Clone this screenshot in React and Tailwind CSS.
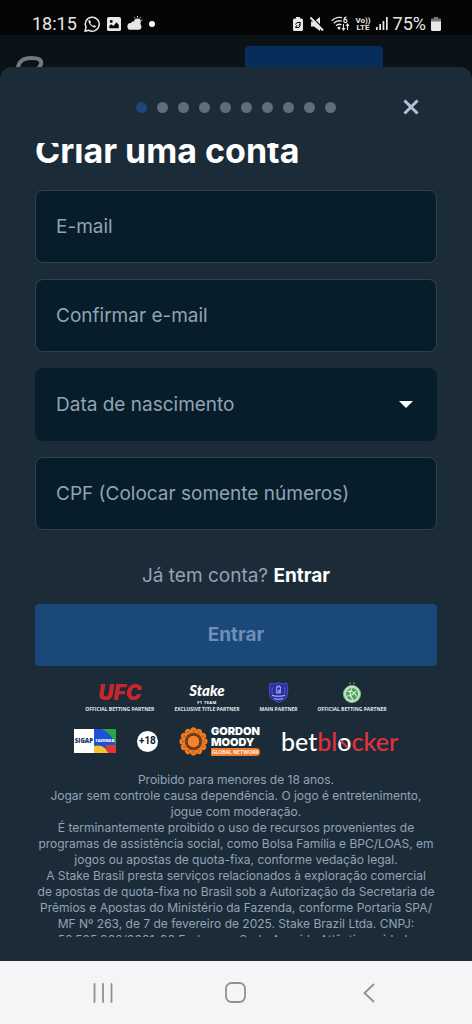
import React from "react";

const sans = "font-['Inter','Open_Sans',sans-serif]";

function StatusBar() {
  return (
    <div className="flex h-[35px] shrink-0 items-center justify-between bg-[#050505] pt-3 pr-[31px] pl-8 text-[#e8e8e8]">
      <div className="flex items-center gap-[6px]">
        <span className="font-['Roboto',sans-serif] text-[18px] leading-5">18:15</span>
        <svg className="h-[18px] w-[18px]" viewBox="0 0 18 18" fill="none" stroke="currentColor" aria-label="WhatsApp">
          <path d="M2 16.2l1-3.800A7 7 0 1 1 5.600 15.200z" strokeWidth="1.500" strokeLinejoin="round" />
          <path d="M6.300 4.800c-.9.600-1.200 1.600-.5 3 1 2.200 2.600 3.700 4.700 4.500 1.200.4 2.200 0 2.600-1.100l-2-1.200-1 .9c-1.300-.6-2.200-1.500-2.800-2.700l.8-.9z" fill="currentColor" stroke="none" />
        </svg>
        <svg className="h-[14px] w-[14px]" viewBox="0 0 15 15" aria-label="Imagem">
          <rect x="0" y="0" width="15" height="15" rx="2" fill="currentColor" />
          <circle cx="4.600" cy="4.800" r="1.500" fill="#050505" />
          <path d="M2.500 12V9.500l2.300-1.700 2 1.800 3.400-4 2.400 2.600V12z" fill="#050505" />
        </svg>
        <svg className="h-[15px] w-4" viewBox="0 0 16 15" aria-label="Tempo">
          <circle cx="10.500" cy="5.800" r="3.300" fill="currentColor" />
          <path d="M10.500 0v1.500M13.500 1.200l-.7 1.200M15.500 4l-1.200.5M7.500 1.200l.6 1.100" stroke="currentColor" strokeWidth="1" />
          <path d="M3.800 13.800a3.400 3.400 0 0 1 0-6.800A3.600 3.600 0 0 1 10.300 7.500a3.200 3.200 0 1 1 1.700 6.300z" fill="currentColor" />
        </svg>
        <span className="h-[6px] w-[6px] rounded-full bg-white" />
      </div>
      <div className="flex items-center gap-[5px]">
        <svg className="h-[14px] w-[10px]" viewBox="0 0 10 14" aria-label="Economia de energia">
          <path d="M3 0h4v1.500h1.500A1.500 1.500 0 0 1 10 3v9.500A1.500 1.500 0 0 1 8.500 14h-7A1.500 1.500 0 0 1 0 12.500V3a1.500 1.500 0 0 1 1.500-1.500H3z" fill="currentColor" />
          <path d="M2.500 7.500L4 5.500h3.500L6 8.500M7.500 7.500L6 10.500H2.500L4 8" fill="none" stroke="#050505" strokeWidth="1" />
        </svg>
        <svg className="ml-[2px] h-[14px] w-[14px]" viewBox="0 0 14 14" aria-label="Sem som">
          <path d="M1 4.500h3L10 0v14L4 9.500H1z" fill="currentColor" />
          <path d="M2 0l12.500 13" stroke="#050505" strokeWidth="1.500" />
          <path d="M.5 .5l12.500 13" stroke="currentColor" strokeWidth="2" />
        </svg>
        <svg className="ml-[2px] h-[15px] w-[19px]" viewBox="0 0 19 15" fill="none" stroke="currentColor" aria-label="Wi-Fi 6">
          <path d="M.8 4.800A11 11 0 0 1 11 1.600M2.800 7.300a8 8 0 0 1 8-2.200M5 9.800a5 5 0 0 1 5.500-1" strokeWidth="1.400" />
          <circle cx="8" cy="12" r="1.500" fill="currentColor" stroke="none" />
          <path d="M15.500 1.200c-2 .2-2.500 1.500-2.500 3.200M12.800 5a1.600 1.600 0 1 0 3.200 0 1.600 1.600 0 1 0-3.200 0" strokeWidth="1.200" />
          <path d="M12.500 8v5.500M11 12l1.500 2 1.500-2M16.500 14V8.500M15 10l1.500-2L18 10" strokeWidth="1.100" />
        </svg>
        <span className="flex flex-col items-center font-['Roboto',sans-serif] text-[8px] leading-[7px] font-bold">
          <span>Vo))</span>
          <span>LTE</span>
        </span>
        <svg className="h-[13px] w-3" viewBox="0 0 12 13" fill="currentColor" aria-label="Sinal">
          <rect x="0" y="10" width="1.700" height="3" />
          <rect x="3.300" y="7" width="1.700" height="6" />
          <rect x="6.600" y="4" width="1.700" height="9" />
          <rect x="10" y="0" width="1.700" height="13" />
        </svg>
        <span className="font-['Roboto',sans-serif] text-[18px] leading-5">75%</span>
        <svg className="h-[14px] w-[10px]" viewBox="0 0 10 14" aria-label="Bateria">
          <path d="M3 0h4v1.500h3V5H0V1.500h3z" fill="#777" />
          <path d="M0 4.500h10v8A1.500 1.500 0 0 1 8.500 14h-7A1.500 1.500 0 0 1 0 12.500z" fill="currentColor" />
        </svg>
      </div>
    </div>
  );
}

const field =
  "h-[73px] w-full rounded-[8px] border border-[#30424f] bg-[#071d2a] px-5 text-[19px] leading-6 text-[#93a2b6] placeholder:text-[#93a2b6] placeholder:opacity-100 outline-none";

const caption = "font-['Open_Sans',sans-serif] text-[5px] leading-[6px] font-bold whitespace-nowrap text-[#e4e8ea]";

function Sponsors() {
  return (
    <div className="flex items-end justify-center gap-5">
      <div className="flex flex-col items-center gap-[3px]">
        <span className="font-['Inter',sans-serif] text-[21px] leading-5 font-black text-[#c9252f] italic">UFC</span>
        <span className={caption}>OFFICIAL BETTING PARTNER</span>
      </div>
      <div className="flex flex-col items-center">
        <span className="font-['Lato',sans-serif] text-[15px] leading-[17px] font-black text-white italic">Stake</span>
        <span className="font-['Open_Sans',sans-serif] text-[4px] leading-[7px] font-bold tracking-widest text-white">F1 TEAM</span>
        <span className={caption}>EXCLUSIVE TITLE PARTNER</span>
      </div>
      <div className="flex flex-col items-center gap-[3px]">
        <svg className="h-[21px] w-[21px]" viewBox="0 0 21 21" aria-label="Everton">
          <path d="M2 1l4 1 4.500-1.500L15 2l4-1v3l1 1-1 9c-.5 3-4 4.500-8.500 6.500C6 18.500 2.500 17 2 14L1 5l1-1z" fill="#2b2fa5" stroke="#5a61d0" strokeWidth=".7" />
          <path d="M8.500 5h4v6h-4zM9 5V4h3v1M10 11V8h1.500v3" fill="none" stroke="#c3c7ff" strokeWidth=".7" />
          <path d="M5 5c-1.500 3-1.500 5 0 7M16 5c1.500 3 1.500 5 0 7" fill="none" stroke="#6c73e0" strokeWidth=".7" />
          <path d="M4 13.500c5 1 8 1 13 0M6 16.500c3 1 6 1 9 0" fill="none" stroke="#d8dbff" strokeWidth=".9" />
        </svg>
        <span className={caption}>MAIN PARTNER</span>
      </div>
      <div className="flex flex-col items-center gap-[3px]">
        <svg className="h-[21px] w-5" viewBox="0 0 20 21" aria-label="Juventude">
          <circle cx="8" cy="1.200" r=".8" fill="#8fce96" />
          <circle cx="12" cy="1.200" r=".8" fill="#8fce96" />
          <circle cx="10" cy="12" r="8.500" fill="#c2e6c3" stroke="#7fbf86" strokeWidth="1" />
          <circle cx="10" cy="12" r="6" fill="#4b9a5a" />
          <path d="M5 14c4 0 7-2 9-5M10 6.500c-3 4-2 8 1 11M5.500 9.500c3-1 7 0 9 5" stroke="#dff3dd" strokeWidth="1.200" fill="none" />
        </svg>
        <span className={caption}>OFFICIAL BETTING PARTNER</span>
      </div>
    </div>
  );
}

function Seals() {
  const petals = Array.from({ length: 12 }, (_, i) => i * 30);
  return (
    <div className="flex items-center justify-center gap-[21px]">
      <div className="flex h-6 w-[42px] bg-white">
        <span className="flex w-5 items-center justify-center font-['Open_Sans',sans-serif] text-[6px] leading-none font-extrabold text-[#25346c]">SIGAP</span>
        <span className="relative flex flex-1 items-center justify-center overflow-hidden">
          <svg className="absolute inset-0 h-full w-full" viewBox="0 0 22 24" preserveAspectRatio="none" aria-hidden="true">
            <path d="M0 0h22v24H0z" fill="#1d51d8" />
            <path d="M8 0h14v17C20 9 15 4 8 0z" fill="#25a845" />
            <path d="M22 16v8h-9c0-4-1-6-2-8z" fill="#e5382c" />
            <path d="M0 17c6-2 12 1 14 7H0z" fill="#f6c42b" />
          </svg>
          <span className="relative font-['Open_Sans',sans-serif] text-[4px] leading-none font-extrabold text-white">FAZENDA</span>
        </span>
      </div>
      <span className="flex h-[21px] w-[21px] items-center justify-center rounded-full bg-white font-['Roboto',sans-serif] text-[10px] leading-none font-bold text-[#10202b]">+18</span>
      <div className="flex items-center gap-[3px]">
        <svg className="h-[29px] w-[29px]" viewBox="0 0 29 29" aria-hidden="true">
          {petals.map((angle) => (
            <g key={angle} transform={`rotate(${angle} 14.5 14.5)`}>
              <path d="M11.800 1.500Q14.500-.8 17.200 1.500L18 5l-3.500 3L11 5z" fill="#f47a20" />
              <circle cx="14.500" cy="3.900" r="1" fill="#c05a18" />
            </g>
          ))}
          <circle cx="14.500" cy="14.500" r="7.700" fill="none" stroke="#7a3d1c" strokeWidth="2" />
          <circle cx="14.500" cy="14.500" r="6" fill="#f8812a" />
        </svg>
        <div className="flex flex-col font-['Inter',sans-serif] text-white">
          <span className="text-[11px] leading-[11px] font-black">GORDON</span>
          <span className="text-[11px] leading-[11px] font-black">MOODY</span>
          <span className="rounded-r-[4px] bg-[#ef7b2f] px-[1px] text-[5px] leading-[8px] font-semibold whitespace-nowrap">GLOBAL NETWORK</span>
        </div>
      </div>
      <span className="flex items-baseline font-['Lato',sans-serif] text-[25px] leading-7 font-medium text-white">
        bet<span className="text-[#e2313c]">bl</span>
        <span className="relative">
          o
          <svg className="absolute top-[13px] left-[3px] h-2 w-2" viewBox="0 0 8 8" aria-hidden="true">
            <path d="M0 0l8 8" stroke="#e2313c" strokeWidth="2" />
          </svg>
        </span>
        <span className="text-[#e2313c]">cker</span>
      </span>
    </div>
  );
}

const legal = [
  "Proibido para menores de 18 anos.",
  "Jogar sem controle causa dependência. O jogo é entretenimento,",
  "jogue com moderação.",
  "É terminantemente proibido o uso de recursos provenientes de",
  "programas de assistência social, como Bolsa Família e BPC/LOAS, em",
  "jogos ou apostas de quota-fixa, conforme vedação legal.",
  "A Stake Brasil presta serviços relacionados à exploração comercial",
  "de apostas de quota-fixa no Brasil sob a Autorização da Secretaria de",
  "Prêmios e Apostas do Ministério da Fazenda, conforme Portaria SPA/",
  "MF Nº 263, de 7 de fevereiro de 2025. Stake Brazil Ltda. CNPJ:",
  "56.525.936/0001-90 Endereço: Sede Avenida Atlântica, cidade",
];

export default function App() {
  const steps = Array.from({ length: 10 }, (_, i) => i);
  return (
    <div className={`flex h-screen flex-col overflow-hidden bg-[#0b1319] ${sans}`}>
      <StatusBar />
      <div className="flex h-8 shrink-0 items-start justify-between overflow-hidden pt-[11px] pr-[89px] pl-4" aria-hidden="true">
        <svg className="mt-[10px] h-[11px] w-7" viewBox="0 0 28 11">
          <path d="M2 13C2 5 8 2 15 2c8 0 11 2 10 6-.5 2-2 3-3 5" fill="none" stroke="#74787b" strokeWidth="4" />
        </svg>
        <div className="h-8 w-[138px] rounded-[4px] bg-[#062d5b]" />
      </div>
      <div role="dialog" aria-label="Criar uma conta" className="flex min-h-0 flex-1 flex-col rounded-t-[12px] bg-[#1b2c38] pb-6">
        <div className="grid h-[76px] shrink-0 grid-cols-[1fr_auto_1fr] items-center px-[43px] pb-1 pt-2">
          <span />
          <div className="flex gap-[10px]">
            {steps.map((step) => (
              <span key={step} className={step === 0 ? "h-[11px] w-[11px] rounded-full bg-[#1d4778]" : "h-[11px] w-[11px] rounded-full bg-[#5e6e79]"} />
            ))}
          </div>
          <button type="button" aria-label="Fechar" className="flex h-9 w-9 items-center justify-center justify-self-end text-[#b4c1da]">
            <svg className="h-4 w-4" viewBox="0 0 16 16" fill="none" stroke="currentColor" strokeWidth="3">
              <path d="M1.500 1.500l13 13M14.500 1.500l-13 13" />
            </svg>
          </button>
        </div>
        <main className="min-h-0 flex-1 overflow-hidden px-[35px]">
          <h1 className="-mt-3 text-[34px] leading-10 font-bold text-white">Criar uma conta</h1>
          <form className="mt-[19px] flex flex-col gap-4" onSubmit={(e) => e.preventDefault()}>
            <input type="email" aria-label="E-mail" placeholder="E-mail" className={field} />
            <input type="email" aria-label="Confirmar e-mail" placeholder="Confirmar e-mail" className={field} />
            <div className="relative">
              <select aria-label="Data de nascimento" className="block h-[73px] w-full appearance-none rounded-[8px] bg-[#071d2a] px-[21px] text-[19px] leading-6 text-[#93a2b6] outline-none">
                <option>Data de nascimento</option>
              </select>
              <svg className="pointer-events-none absolute top-[33px] right-6 h-[7px] w-[14px]" viewBox="0 0 14 7" aria-hidden="true">
                <path d="M0 0h14L7 7z" fill="#fff" />
              </svg>
            </div>
            <input type="text" aria-label="CPF" placeholder="CPF (Colocar somente números)" className={field} />
            <p className="mt-[18px] text-center text-[19px] leading-6 text-[#93a2b6]">
              Já tem conta? <a href="#entrar" className="font-bold text-white">Entrar</a>
            </p>
            <button type="submit" className="h-[62px] w-full rounded-[4px] bg-[#1a4878] text-[19px] font-bold text-[#6d8fb8]">Entrar</button>
          </form>
          <div className="mt-4 flex flex-col gap-[14px]">
            <Sponsors />
            <Seals />
          </div>
          <p className="mt-4 text-center text-[12px] leading-4 whitespace-nowrap text-[#93a2b6]">
            {legal.map((line) => (
              <span key={line} className="block">{line}</span>
            ))}
          </p>
        </main>
      </div>
      <nav aria-label="Sistema" className="flex h-[63px] shrink-0 items-center justify-around bg-[#f5f5f8] px-[37px] text-[#909092]">
        <button type="button" aria-label="Recentes" className="flex h-11 w-11 items-center justify-center">
          <svg className="h-5 w-5" viewBox="0 0 20 20" stroke="currentColor" strokeWidth="1.800" strokeLinecap="round">
            <path d="M1.500 1v18M10 1v18M18.500 1v18" />
          </svg>
        </button>
        <button type="button" aria-label="Início" className="flex h-11 w-11 items-center justify-center">
          <svg className="h-[21px] w-[21px]" viewBox="0 0 21 21" fill="none" stroke="currentColor" strokeWidth="1.800">
            <rect x="1" y="1" width="19" height="19" rx="5.500" />
          </svg>
        </button>
        <button type="button" aria-label="Voltar" className="flex h-11 w-11 items-center justify-center">
          <svg className="h-5 w-3" viewBox="0 0 12 20" fill="none" stroke="currentColor" strokeWidth="1.800">
            <path d="M11 1L1.500 10l9.500 9" />
          </svg>
        </button>
      </nav>
    </div>
  );
}
